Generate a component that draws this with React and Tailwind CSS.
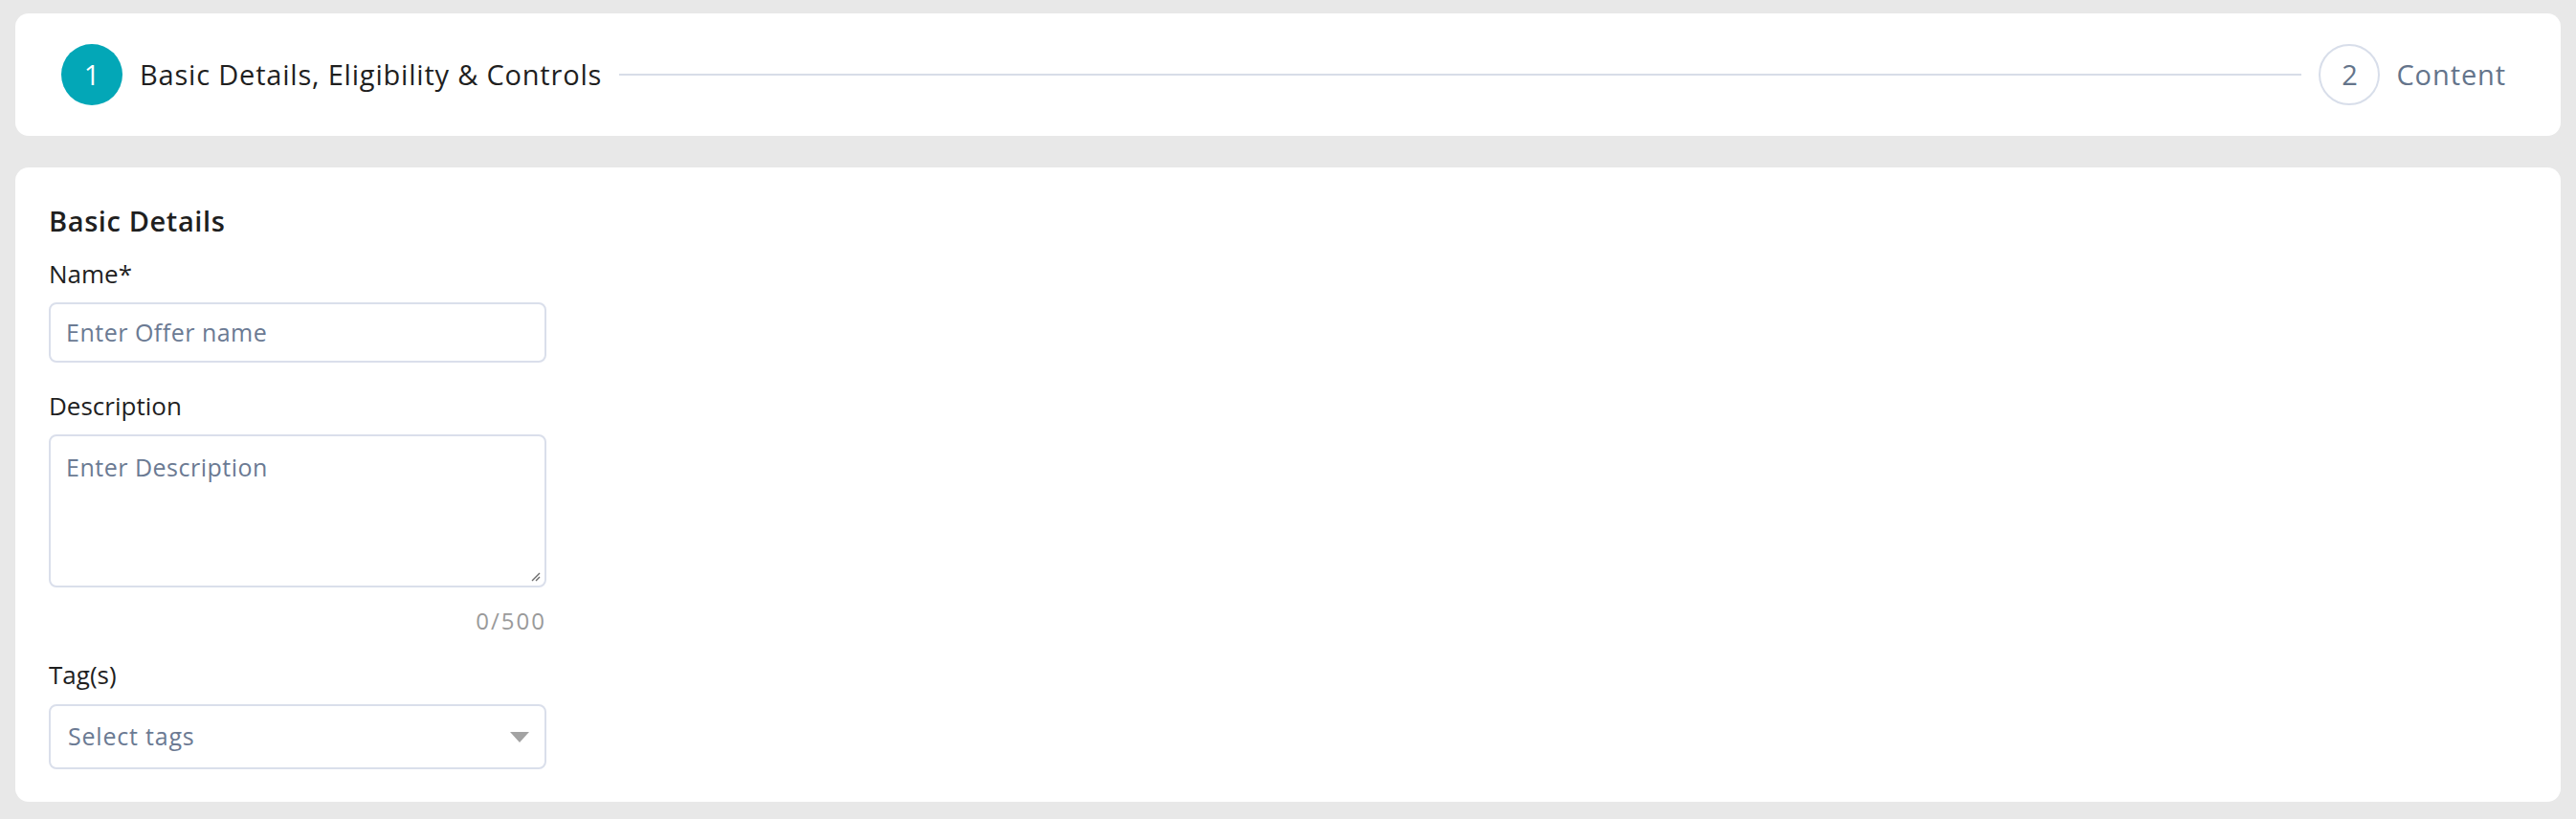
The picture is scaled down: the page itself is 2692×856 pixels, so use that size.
import React from "react";

export default function App() {
  return (
    <div className="w-[2692px] h-[856px] bg-[#e8e8e8] px-[16px] pt-[14px] font-['Open_Sans',_'Liberation_Sans',_sans-serif] text-[#1f1f1f]">
      <div className="h-[128px] bg-white rounded-[14px] flex items-center pl-[48px] pr-[57px]">
        <div className="w-[64px] h-[64px] rounded-full bg-[#03a7b7] flex items-center justify-center text-white text-[29px] shrink-0">1</div>
        <div className="ml-[18px] text-[29px] tracking-[0.8px] text-[#1f1f1f] shrink-0">Basic Details, Eligibility &amp; Controls</div>
        <div className="flex-1 h-[2px] bg-[#d8dde8] mx-[18px]" />
        <div className="w-[64px] h-[64px] rounded-full border-2 border-[#d8deea] flex items-center justify-center text-[#64748b] text-[29px] shrink-0">2</div>
        <div className="ml-[17px] text-[29px] tracking-[0.9px] text-[#64748b] shrink-0">Content</div>
      </div>
      <div className="mt-[33px] h-[663px] bg-white rounded-[14px] px-[35px] pt-[36px] flex flex-col">
        <div className="text-[29px] font-semibold tracking-[0.6px] leading-[40px]">Basic Details</div>
        <div className="mt-[17px] text-[26px] leading-[36px]">Name*</div>
        <div className="mt-[12px] w-[520px] h-[63px] border-2 border-[#dadfeb] rounded-[8px] flex items-center px-[16px] text-[25px] tracking-[0.5px] text-[#6b7a93]">Enter Offer name</div>
        <div className="mt-[27px] text-[26px] leading-[36px]">Description</div>
        <div className="mt-[12px] w-[520px] h-[160px] border-2 border-[#dadfeb] rounded-[8px] relative px-[16px] pt-[14px] text-[25px] tracking-[0.5px] text-[#6b7a93]">
          Enter Description
          <svg className="absolute right-[4px] bottom-[4px]" width="12" height="12" viewBox="0 0 12 12">
            <path d="M11 3 L3 11 M11 7 L7 11" stroke="#6b6b6b" strokeWidth="1.4" />
          </svg>
        </div>
        <div className="w-[520px] text-right mt-[20px] text-[24px] tracking-[2px] text-[#9a9a9a] leading-[30px]">0/500</div>
        <div className="mt-[23px] text-[26px] leading-[36px]">Tag(s)</div>
        <div className="mt-[13px] w-[520px] h-[68px] border-2 border-[#dadfeb] rounded-[8px] flex items-center justify-between pl-[18px] pr-[16px] text-[25px] tracking-[0.8px] text-[#6b7a93]">
          <span>Select tags</span>
          <svg width="20" height="11" viewBox="0 0 20 11"><path d="M0 0 L20 0 L10 11 Z" fill="#a3a3a3" /></svg>
        </div>
      </div>
    </div>
  );
}
